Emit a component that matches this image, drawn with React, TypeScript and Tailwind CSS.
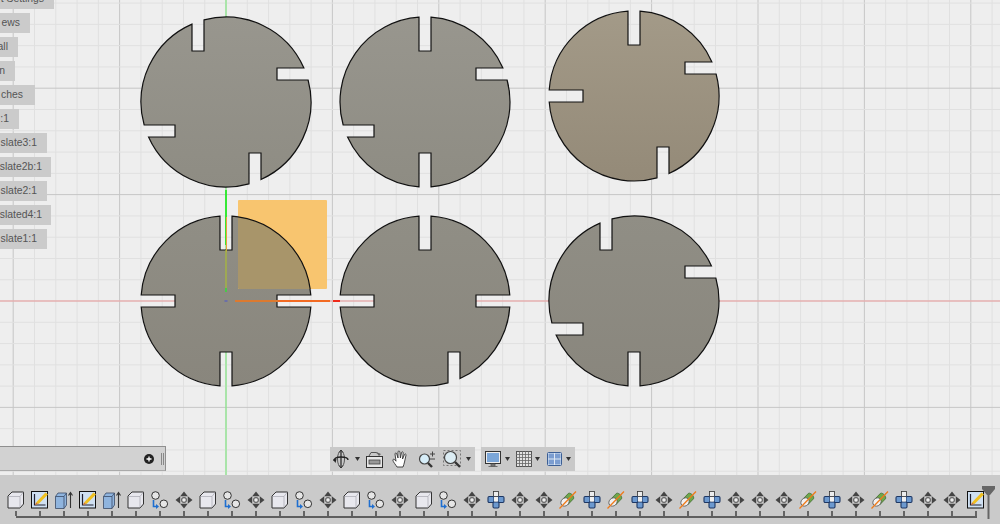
import React from "react";

const R = 85;
const DEPTH = 51;

// slot offsets from the disk centre, one per side
function diskPath(cx: number, cy: number, top: number, right: number, bottom: number, left: number) {
  const h = (o: number) => Math.sqrt(R * R - o * o);
  const a = `A${R} ${R} 0 0 1`;
  const p = (x: number, y: number) => `${(cx + x).toFixed(2)} ${(cy + y).toFixed(2)}`;
  return [
    `M${p(top - 6, -h(top - 6))}`,
    `L${p(top - 6, -DEPTH)}`,
    `L${p(top + 6, -DEPTH)}`,
    `L${p(top + 6, -h(top + 6))}`,
    `${a} ${p(h(right - 6), right - 6)}`,
    `L${p(DEPTH, right - 6)}`,
    `L${p(DEPTH, right + 6)}`,
    `L${p(h(right + 6), right + 6)}`,
    `${a} ${p(bottom + 6, h(bottom + 6))}`,
    `L${p(bottom + 6, DEPTH)}`,
    `L${p(bottom - 6, DEPTH)}`,
    `L${p(bottom - 6, h(bottom - 6))}`,
    `${a} ${p(-h(left + 6), left + 6)}`,
    `L${p(-DEPTH, left + 6)}`,
    `L${p(-DEPTH, left - 6)}`,
    `L${p(-h(left - 6), left - 6)}`,
    `${a} ${p(top - 6, -h(top - 6))}Z`,
  ].join(" ");
}

const disks = [
  { cx: 226, cy: 102, t: -28, r: -28, b: 29, l: 29, fill: "url(#steel)" },
  { cx: 425, cy: 102, t: 0, r: -28, b: 0, l: 29, fill: "url(#steel)" },
  { cx: 634, cy: 96, t: 0, r: -28, b: 29, l: 0, fill: "url(#bronze)" },
  { cx: 226, cy: 301, t: 0, r: 0, b: 0, l: 0, fill: "url(#steel2)" },
  { cx: 425, cy: 301, t: 0, r: 0, b: 29, l: 0, fill: "url(#steel2)" },
  { cx: 634, cy: 301, t: -28, r: -29, b: 0, l: 28, fill: "url(#steel2)" },
];

const labels = [
  { text: "t Settings", cls: "w-[54px] -mt-[11px] pr-[10px]" },
  { text: "ews", cls: "w-[30px] pr-[10px]" },
  { text: "all", cls: "w-[18px] pr-[10px]" },
  { text: "n", cls: "w-[15px] pr-[10px]" },
  { text: "ches", cls: "w-[35px] pr-[12px]" },
  { text: ":1", cls: "w-[19px] pr-[10px]" },
  { text: "slate3:1", cls: "w-[47px] pr-[10px]" },
  { text: "slate2b:1", cls: "w-[51px] pr-[9px]" },
  { text: "slate2:1", cls: "w-[47px] pr-[10px]" },
  { text: "slated4:1", cls: "w-[51px] pr-[9px]" },
  { text: "slate1:1", cls: "w-[47px] pr-[10px]" },
];

function Viewport() {
  const xs: number[] = [];
  const ys: number[] = [];
  const step = 106.4 / 5;
  for (let i = -11; i < 37; i++) xs.push(i);
  for (let i = -15; i < 9; i++) ys.push(i);
  const d4 = disks[3];
  return (
    <svg className="absolute inset-0" width="1000" height="475" viewBox="0 0 1000 475">
      <defs>
        <linearGradient id="steel" x1="0" y1="0" x2="0" y2="1">
          <stop offset="0" stopColor="#98968e" />
          <stop offset="1" stopColor="#8e8c83" />
        </linearGradient>
        <linearGradient id="steel2" x1="0" y1="0" x2="0" y2="1">
          <stop offset="0" stopColor="#908e85" />
          <stop offset="1" stopColor="#89867d" />
        </linearGradient>
        <linearGradient id="bronze" x1="0" y1="0" x2="0" y2="1">
          <stop offset="0" stopColor="#a39a88" />
          <stop offset="1" stopColor="#948a78" />
        </linearGradient>
        <clipPath id="sliver">
          <rect x="238" y="200" width="89" height="89" rx="1" />
        </clipPath>
      </defs>
      {xs.map((i) => (
        <line key={`x${i}`} x1={226 + i * step} x2={226 + i * step} y1="0" y2="475" stroke={i % 5 === 0 ? "#c6c6c6" : "#e0e0e0"} strokeWidth="1" />
      ))}
      {ys.map((i) => (
        <line key={`y${i}`} y1={301 + i * step} y2={301 + i * step} x1="0" x2="1000" stroke={i % 5 === 0 ? "#c6c6c6" : "#e0e0e0"} strokeWidth="1" />
      ))}
      <line x1="0" x2="1000" y1="301" y2="301" stroke="#f4a3a3" strokeWidth="1" />
      <line x1="226" x2="226" y1="0" y2="475" stroke="#78ee78" strokeWidth="1" />
      {disks.map((d) => (
        <path key={`${d.cx}-${d.cy}`} d={diskPath(d.cx, d.cy, d.t, d.r, d.b, d.l)} fill={d.fill} stroke="#111" strokeWidth="1.2" />
      ))}
      <rect x="238" y="200" width="89" height="89" rx="1" fill="#f8c56f" />
      <path d={diskPath(d4.cx, d4.cy, d4.t, d4.r, d4.b, d4.l)} fill="#a8956a" stroke="#111" strokeWidth="1.2" clipPath="url(#sliver)" />
      <line x1="226" x2="226" y1="190" y2="245" stroke="#35e835" strokeWidth="2" />
      <line x1="226.500" x2="226.500" y1="217" y2="252" stroke="#e9a23c" strokeWidth="1" />
      <line x1="226" x2="226" y1="250" y2="290" stroke="#a6b540" strokeWidth="1.400" />
      <rect x="225" y="288" width="2" height="4" fill="#49c949" />
      <line x1="235" x2="278" y1="301" y2="301" stroke="#dc7a30" strokeWidth="2" />
      <line x1="278" x2="330" y1="301" y2="301" stroke="#f26a22" strokeWidth="2" />
      <line x1="333" x2="340" y1="301" y2="301" stroke="#ee2a1a" strokeWidth="2" />
      <rect x="224.500" y="300" width="3" height="2" fill="#6b6fa8" />
    </svg>
  );
}

function Caret() {
  return (
    <svg width="5" height="4" viewBox="0 0 5 4">
      <path d="M0 0h5L2.500 4z" fill="#333" />
    </svg>
  );
}

function OrbitIcon() {
  return (
    <svg width="18" height="20" viewBox="0 0 18 20">
      <path d="M9 1v18" stroke="#222" strokeWidth="1.200" />
      <path d="M7 3.500 9 1l2 2.500M7 16.500 9 19l2-2.500" fill="none" stroke="#222" strokeWidth="1" />
      <ellipse cx="9" cy="10" rx="3.500" ry="8" fill="none" stroke="#555" strokeWidth="1" />
      <path d="M2 12c0-3 3-4 7-4s7 1 7 3" fill="none" stroke="#222" strokeWidth="1.400" />
      <path d="M1 10.500 3.500 14l1-4z" fill="#222" />
    </svg>
  );
}

function LookAtIcon() {
  return (
    <svg width="17" height="17" viewBox="0 0 17 17">
      <path d="M3 5 5 1.500h5L13.500 3" fill="none" stroke="#555" strokeWidth="1" />
      <path d="M10 1 15 3l-2 2z" fill="#666" />
      <rect x="0.500" y="5.500" width="16" height="11" fill="#e7e7e7" stroke="#333" />
      <rect x="3" y="9" width="11" height="4" fill="#999" stroke="#444" strokeWidth="0.800" />
    </svg>
  );
}

function HandIcon() {
  return (
    <svg width="16" height="18" viewBox="0 0 16 18">
      <path
        d="M5 17c-1-2-4-5-4.200-7 .2-1 1.400-1 2.200 0l1 1.200L3 4c0-1.300 1.500-1.300 1.800 0L6 8 6 2c0-1.300 1.700-1.300 1.900 0L8.400 8 9.500 2.600c.3-1.200 1.800-1 1.700.2L10.500 9l2-4.500c.5-1 1.800-.5 1.500.6L12.500 12c-.4 2-1 3.500-1.500 5z"
        fill="#fff"
        stroke="#333"
        strokeWidth="0.900"
      />
    </svg>
  );
}

function ZoomIcon() {
  return (
    <svg width="18" height="17" viewBox="0 0 18 17">
      <circle cx="6.500" cy="8" r="5" fill="#d6edf8" stroke="#444" strokeWidth="1.200" />
      <path d="m10 12 4 4" stroke="#333" strokeWidth="2.400" />
      <path d="M12 3h5M14.500 .5v5M12 8h5" stroke="#444" strokeWidth="1" />
    </svg>
  );
}

function FitIcon() {
  return (
    <svg width="18" height="18" viewBox="0 0 18 18">
      <rect x="0.500" y="0.500" width="17" height="15" fill="none" stroke="#777" strokeDasharray="2 2" />
      <circle cx="7.500" cy="7.500" r="6" fill="#dcedf4" stroke="#444" strokeWidth="1.200" />
      <path d="m12 12 5 5" stroke="#333" strokeWidth="2.400" />
    </svg>
  );
}

function MonitorIcon() {
  return (
    <svg width="16" height="17" viewBox="0 0 16 17">
      <rect x="0.500" y="0.500" width="15" height="12" fill="#eee" stroke="#333" />
      <rect x="2" y="2" width="12" height="9" fill="#7ba6d8" />
      <path d="M6 13h4v2H6zM3.500 15.500h9" fill="#888" stroke="#555" strokeWidth="0.800" />
    </svg>
  );
}

function GridIcon() {
  const cells = [3, 6, 9, 12];
  return (
    <svg width="16" height="16" viewBox="0 0 16 16">
      <rect x="0.500" y="0.500" width="15" height="15" fill="#e4e4e4" stroke="#555" />
      {cells.map((c) => (
        <path key={c} d={`M${c + 0.5} 0v16M0 ${c + 0.5}h16`} stroke="#666" strokeWidth="0.800" />
      ))}
    </svg>
  );
}

function ViewsIcon() {
  return (
    <svg width="15" height="14" viewBox="0 0 15 14">
      <rect x="0.500" y="0.500" width="14" height="13" rx="1" fill="#dfe8f4" stroke="#3c5f95" />
      <rect x="1.500" y="1.500" width="5.500" height="5" fill="#7b9dd0" />
      <rect x="8" y="1.500" width="5.500" height="5" fill="#7b9dd0" />
      <rect x="1.500" y="7.500" width="5.500" height="5" fill="#7b9dd0" />
      <rect x="8" y="7.500" width="5.500" height="5" fill="#7b9dd0" />
    </svg>
  );
}

function NavBar() {
  return (
    <div className="absolute left-[330px] top-[447px] flex h-[24px] gap-[6px]">
      <div className="flex w-[145px] items-center bg-[#c9c9c9] pl-[2px]">
        <OrbitIcon />
        <span className="ml-[5px] flex"><Caret /></span>
        <span className="ml-[6px] flex"><LookAtIcon /></span>
        <span className="ml-[9px] flex"><HandIcon /></span>
        <span className="ml-[10px] flex"><ZoomIcon /></span>
        <span className="ml-[7px] flex"><FitIcon /></span>
        <span className="ml-[5px] flex"><Caret /></span>
      </div>
      <div className="flex w-[94px] items-center bg-[#c9c9c9] pl-[4px]">
        <MonitorIcon />
        <span className="ml-[4px] flex"><Caret /></span>
        <span className="ml-[6px] flex"><GridIcon /></span>
        <span className="ml-[3px] flex"><Caret /></span>
        <span className="ml-[7px] flex"><ViewsIcon /></span>
        <span className="ml-[4px] flex"><Caret /></span>
      </div>
    </div>
  );
}

function BoxStep() {
  return (
    <svg width="18" height="18" viewBox="0 0 18 18">
      <path d="M1 5 5 1h11.500v12l-3.500 4H1z" fill="#e8e8ee" stroke="#333" strokeWidth="1" strokeLinejoin="round" />
      <path d="M1.500 5.500H13V16.500M13 5.500l3-4" fill="none" stroke="#a8a8b0" strokeWidth="0.700" />
    </svg>
  );
}

function SketchStep() {
  return (
    <svg width="18" height="18" viewBox="0 0 18 18">
      <rect x="0.500" y="0.500" width="16" height="16.500" fill="#cfe0f2" stroke="#111" />
      <path d="M3.500 3v11h11" fill="none" stroke="#223" strokeWidth="1.200" />
      <path d="M5 11.500 14.500 1.500l2.500 2L7.500 13z" fill="#f0c020" />
      <path d="M5 11.500 7.500 13l-3.500 1z" fill="#d8762a" />
    </svg>
  );
}

function ExtrudeStep() {
  return (
    <svg width="18" height="18" viewBox="0 0 18 18">
      <path d="M.5 5.500 3 2h8.500v12l-2.500 3.500H.5z" fill="#8fb4de" stroke="#3a4a66" strokeWidth="0.800" />
      <path d="M9 5.500V17.500M.5 5.500H9l2.500-3.500" fill="none" stroke="#3a4a66" strokeWidth="0.800" />
      <path d="M15.500 17V2M13.500 4.500l2-3 2 3" fill="none" stroke="#333" strokeWidth="1.100" />
    </svg>
  );
}

function CopyStep() {
  return (
    <svg width="18" height="18" viewBox="0 0 18 18">
      <circle cx="4.500" cy="4.500" r="3.800" fill="#e6e6e6" stroke="#333" strokeWidth="1" />
      <circle cx="12.800" cy="12.800" r="3.800" fill="#e6e6e6" stroke="#333" strokeWidth="1" />
      <path d="M2.500 9v6.500h3" fill="none" stroke="#1f6fd0" strokeWidth="1.600" />
      <path d="M5 13l3 2.500L5 18z" fill="#1f6fd0" />
    </svg>
  );
}

function MoveStep() {
  return (
    <svg width="18" height="18" viewBox="0 0 18 18">
      <path d="M9 .5 12.800 5.200H5.200zM9 17.500 5.200 12.800h7.600zM.5 9 5.200 5.200v7.600zM17.500 9 12.800 12.800V5.200z" fill="#444" />
      <rect x="6.800" y="6.800" width="4.400" height="4.400" rx="1.200" fill="#eee" stroke="#444" strokeWidth="1" />
    </svg>
  );
}

function PatternStep() {
  return (
    <svg width="18" height="18" viewBox="0 0 18 18">
      <rect x="6.500" y="0.500" width="5" height="5" fill="#eee" stroke="#333" strokeWidth="0.800" />
      <rect x="1" y="5.500" width="6" height="6" rx="1.200" fill="#6c99cf" stroke="#1e3763" strokeWidth="1.100" />
      <rect x="11" y="5.500" width="6" height="6" rx="1.200" fill="#6c99cf" stroke="#1e3763" strokeWidth="1.100" />
      <rect x="6" y="11" width="6" height="6" rx="1.200" fill="#6c99cf" stroke="#1e3763" strokeWidth="1.100" />
      <rect x="7" y="6" width="4" height="4.500" fill="#f0f0f0" />
    </svg>
  );
}

function CylinderStep() {
  return (
    <svg width="18" height="18" viewBox="0 0 18 18">
      <path d="M3.500 8.500 9.500 2.300c2-1 6.200 3 5 5.500L8.500 14z" fill="#6fa84a" stroke="#3d6a2e" strokeWidth="0.800" />
      <ellipse cx="6" cy="11" rx="3.800" ry="4.500" transform="rotate(45 6 11)" fill="#f0f0f0" stroke="#555" strokeWidth="0.800" />
      <path d="M.5 17.500 17 .5" stroke="#ee7a1a" strokeWidth="1.300" />
    </svg>
  );
}

const B = BoxStep;
const K = SketchStep;
const E = ExtrudeStep;
const C = CopyStep;
const M = MoveStep;
const P = PatternStep;
const Y = CylinderStep;

const steps = [B, K, E, K, E, B, C, M, B, C, M, B, C, M, B, C, M, B, C, M, P, M, M, Y, P, Y, P, M, Y, P, M, M, M, Y, P, M, Y, P, M, M, K];

function Timeline() {
  return (
    <div className="relative h-[49px] bg-[#cacaca] pl-[4px] pt-[16px]">
      <div className="flex">
        {steps.map((Icon, i) => (
          <div key={i} className="flex w-[24px] flex-col items-center">
            <Icon />
            <div className="mt-[2px] h-[5px] w-[2px] bg-[#666]" />
          </div>
        ))}
      </div>
      <div className="ml-[12px] h-[2px] w-[961px] bg-[#5f5f5f]" />
      <svg className="absolute left-[982px] top-[11px]" width="13" height="33" viewBox="0 0 13 33">
        <path d="M0 0h13v3L8 9H7.500v24h-2V9H5L0 3z" fill="#666" />
      </svg>
    </div>
  );
}

export default function App() {
  return (
    <div className="flex h-[524px] w-[1000px] flex-col overflow-hidden bg-[#cacaca] font-['Liberation_Sans',Arial,sans-serif]">
      <div className="relative h-[475px] bg-[#eeeeee]">
        <Viewport />

        <div className="absolute left-0 top-0 flex flex-col gap-[4px]">
          {labels.map((l) => (
            <div key={l.text} className={`flex h-[20px] items-center justify-end overflow-hidden whitespace-nowrap bg-[#cbcbcb] text-[10.4px] text-[#555] ${l.cls}`}>
              {l.text}
            </div>
          ))}
        </div>

        <div className="absolute left-0 top-[446px] flex h-[25px] w-[166px] items-center justify-end border-b border-r border-t border-b-[#aaaaaa] border-r-[#8f8f8f] border-t-[#8f8f8f] bg-[#d2d2d2]">
          <svg width="10" height="10" viewBox="0 0 10 10">
            <circle cx="5" cy="5" r="5" fill="#222" />
            <path d="M2.500 5h5M5 2.500v5" stroke="#fff" strokeWidth="1.300" />
          </svg>
          <div className="ml-[7px] mr-[1px] h-[12px] w-[3px] border-x border-[#888]" />
        </div>

        <NavBar />
      </div>
      <Timeline />
    </div>
  );
}
